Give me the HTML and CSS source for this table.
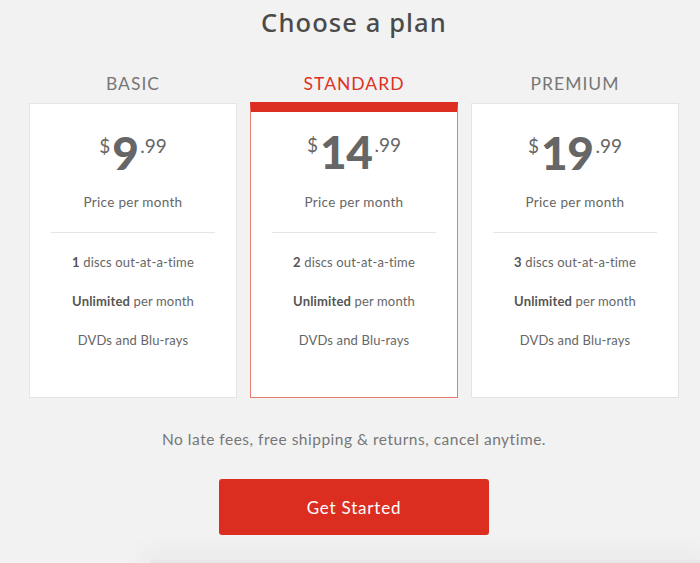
FILE: index.html
```html
<!DOCTYPE html>
<html>
<head>
<meta charset="utf-8">
<link rel="stylesheet" href="styles.css">
</head>
<body>
<main class="page">
  <h1 class="title">Choose a plan</h1>
  <div class="plans">
    <section class="plan">
      <h2 class="plan-name">BASIC</h2>
      <div class="card">
        <div class="price"><span class="cur">$</span><span class="amount">9</span><span class="cents">.99</span></div>
        <p class="per">Price per month</p>
        <hr class="divider">
        <ul class="features">
          <li><b>1</b> discs out-at-a-time</li>
          <li><b>Unlimited</b> per month</li>
          <li>DVDs and Blu-rays</li>
        </ul>
      </div>
    </section>
    <section class="plan plan-featured">
      <h2 class="plan-name">STANDARD</h2>
      <div class="card">
        <div class="price"><span class="cur">$</span><span class="amount">14</span><span class="cents">.99</span></div>
        <p class="per">Price per month</p>
        <hr class="divider">
        <ul class="features">
          <li><b>2</b> discs out-at-a-time</li>
          <li><b>Unlimited</b> per month</li>
          <li>DVDs and Blu-rays</li>
        </ul>
      </div>
    </section>
    <section class="plan">
      <h2 class="plan-name">PREMIUM</h2>
      <div class="card">
        <div class="price"><span class="cur">$</span><span class="amount">19</span><span class="cents">.99</span></div>
        <p class="per">Price per month</p>
        <hr class="divider">
        <ul class="features">
          <li><b>3</b> discs out-at-a-time</li>
          <li><b>Unlimited</b> per month</li>
          <li>DVDs and Blu-rays</li>
        </ul>
      </div>
    </section>
  </div>
  <p class="note">No late fees, free shipping &amp; returns, cancel anytime.</p>
  <div class="cta-row"><button class="cta">Get Started</button></div>
</main>
<div class="bottom-sheet"></div>
</body>
</html>
```

FILE: styles.css
```css
html, body {
  margin: 0;
  padding: 0;
  background: #f2f2f2;
  height: 100%;
  overflow: hidden;
}
body {
  font-family: Lato, "Noto Sans", sans-serif;
  color: #666;
  position: relative;
}
.page {
  width: 650px;
  padding-left: 29px;
  display: flex;
  flex-direction: column;
  align-items: center;
}
.title {
  margin: 5px 0 0;
  font-family: "Noto Sans", Lato, sans-serif;
  font-size: 25.5px;
  line-height: 34px;
  font-weight: 500;
  color: #4a4a4a;
  letter-spacing: 1.1px;
}
.plans {
  margin-top: 33px;
  width: 100%;
  display: grid;
  grid-template-columns: repeat(3, 208px);
  column-gap: 13px;
}
.plan {
  display: flex;
  flex-direction: column;
}
.plan-name {
  margin: 0;
  text-align: center;
  font-size: 17.5px;
  line-height: 24px;
  font-weight: 400;
  letter-spacing: 1px;
  color: #777;
}
.plan-featured .plan-name { color: #dd3225; }
.card {
  flex: 1;
  margin-top: 7px;
  box-sizing: border-box;
  background: #fff;
  border: 1px solid #e4e4e4;
  padding: 0 21px 48px;
  display: flex;
  flex-direction: column;
  align-items: stretch;
}
.plan-featured .card {
  margin-top: 6px;
  border: 1px solid #ea7a70;
  border-top: 10px solid #dc2e20;
}
.price {
  margin-top: 30px;
  display: flex;
  justify-content: center;
  align-items: flex-start;
  color: #666;
}
.plan-featured .price { margin-top: 21px; }
.cur, .cents {
  font-size: 19px;
  line-height: 22px;
  font-weight: 400;
}
.cur { margin-right: 2px; margin-top: 1px; }
.cents { margin-left: 2px; margin-top: 1px; }
.amount {
  font-size: 46px;
  line-height: 38px;
  font-weight: 900;
  letter-spacing: -0.5px;
}
.per {
  margin: 21px 0 0;
  text-align: center;
  font-size: 13.5px;
  line-height: 18px;
  letter-spacing: 0.3px;
}
.plan-featured .per { margin-top: 22px; }
.divider {
  margin: 21px 0 0;
  border: 0;
  border-top: 1px solid #e6e6e6;
  height: 0;
}
.features {
  list-style: none;
  margin: 20px 0 0;
  padding: 0;
  display: flex;
  flex-direction: column;
  gap: 21px;
  text-align: center;
  font-size: 13px;
  line-height: 18px;
  letter-spacing: 0.15px;
}
.features b {
  font-weight: 700;
  color: #555;
}
.note {
  margin: 31px 0 0;
  font-size: 15.5px;
  line-height: 20px;
  color: #777;
  letter-spacing: 0.5px;
}
.cta-row {
  margin-top: 30px;
  display: flex;
  justify-content: center;
}
.cta {
  width: 270px;
  height: 56px;
  border: 0;
  border-radius: 3px;
  background: #dc2e20;
  color: #fff;
  font-family: Lato, "Noto Sans", sans-serif;
  font-size: 17px;
  letter-spacing: 0.8px;
  cursor: pointer;
}
.bottom-sheet {
  position: absolute;
  left: 150px;
  right: 0;
  top: 560px;
  bottom: 0;
  background: #e8e8e8;
  box-shadow: 0 0 24px 10px rgba(0, 0, 0, 0.035);
}
```
